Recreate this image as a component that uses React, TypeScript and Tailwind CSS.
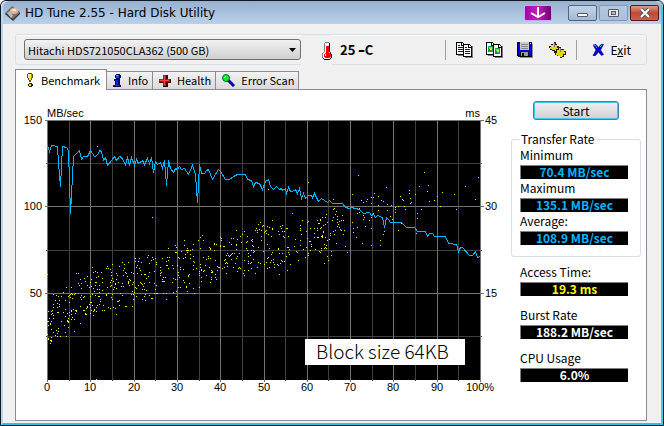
import React, { useState } from "react";

type Point = [number, number];

const TABS = ["Benchmark", "Info", "Health", "Error Scan"];

// Trace and outlier points are in thirds of a plot pixel, origin at (142, 61)
const TRACE: Point[] = [
  [142, 137], [148, 154], [155, 137], [172, 138], [176, 190], [182, 259],
  [187, 139], [200, 142], [205, 150], [212, 340], [220, 170], [238, 152],
  [245, 178], [250, 169], [262, 168], [271, 151], [284, 170], [292, 166],
  [299, 151], [303, 155], [309, 182], [316, 172], [323, 196], [333, 180],
  [342, 169], [350, 181], [358, 169], [364, 172], [376, 193], [382, 172],
  [388, 196], [395, 172], [403, 196], [409, 179], [414, 190], [427, 181],
  [434, 192], [443, 176], [448, 190], [454, 172], [460, 218], [466, 185],
  [472, 192], [481, 187], [488, 206], [493, 182], [499, 256], [506, 181],
  [512, 204], [520, 216], [527, 204], [533, 207], [539, 199], [545, 208],
  [553, 205], [565, 223], [577, 196], [585, 222], [592, 307], [598, 192],
  [604, 220], [612, 220], [619, 210], [626, 209], [638, 238], [655, 208],
  [662, 214], [675, 238], [688, 238], [700, 230], [713, 223], [736, 223],
  [742, 237], [753, 240], [760, 259], [767, 246], [779, 250], [787, 268],
  [796, 243], [805, 237], [812, 258], [821, 268], [830, 258], [839, 268],
  [844, 264], [848, 270], [855, 264], [860, 281], [865, 262], [870, 275],
  [878, 274], [886, 268], [892, 280], [898, 265], [904, 295], [910, 281],
  [917, 295], [925, 286], [933, 286], [938, 293], [944, 281], [955, 304],
  [965, 294], [982, 306], [989, 301], [997, 311], [1027, 310], [1035, 321],
  [1048, 326], [1055, 322], [1078, 327], [1090, 340], [1108, 338],
  [1114, 346], [1120, 343], [1126, 352], [1131, 346], [1147, 352],
  [1153, 382], [1160, 353], [1166, 357], [1172, 367], [1205, 367],
  [1220, 382], [1244, 382], [1253, 394], [1276, 394], [1283, 408],
  [1288, 400], [1298, 401], [1303, 409], [1335, 409], [1345, 429],
  [1369, 433], [1375, 453], [1380, 442], [1388, 442], [1407, 466],
  [1417, 466], [1427, 455], [1432, 472], [1440, 468],
];

const OUTLIERS: Point[] = [
  [292, 139], [457, 352], [805, 268], [877, 340], [925, 247], [142, 522],
  [289, 838], [1000, 298], [1001, 328], [1004, 324], [1007, 343],
  [1008, 333], [999, 352], [1012, 350], [1012, 358], [1012, 368],
  [1012, 380], [1016, 374], [1018, 365], [1028, 346], [1030, 361],
  [1006, 392], [1001, 395], [1024, 392], [1033, 392], [1018, 381],
  [1022, 389], [991, 407], [1003, 404], [1031, 404], [1009, 430],
  [1036, 439], [1042, 457], [1024, 362], [1057, 283], [1076, 226],
  [1057, 367], [1060, 386], [1061, 396], [1069, 412], [1072, 382],
  [1072, 340], [1078, 324], [1078, 338], [1084, 300], [1091, 307],
  [1090, 347], [1090, 358], [1093, 352], [1099, 304], [1101, 298],
  [1107, 362], [1096, 379], [1087, 431], [1114, 292], [1120, 292],
  [1123, 280], [1113, 310], [1114, 353], [1111, 344], [1114, 386],
  [1114, 436], [1120, 340], [1135, 290], [1144, 300], [1150, 305],
  [1135, 317], [1135, 330], [1140, 421], [1141, 436], [1150, 403],
  [1153, 394], [1159, 262], [1162, 313], [1162, 332], [1171, 349],
  [1177, 358], [1175, 316], [1186, 322], [1186, 328], [1186, 337],
  [1195, 319], [1201, 289], [1207, 298], [1210, 301], [1213, 320],
  [1216, 328], [1194, 391], [1205, 371], [1228, 271], [1228, 280],
  [1231, 295], [1234, 307], [1231, 310], [1246, 283], [1258, 259],
  [1273, 217], [1285, 256], [1282, 274], [1288, 304], [1303, 301],
  [1312, 290], [1321, 319], [1327, 277], [1364, 283], [1369, 328],
  [1396, 259], [1426, 298], [1435, 232], [1264, 328], [1253, 340],
  [1252, 355], [1249, 401], [985, 481], [974, 490],
];

// Band of the access times: plot x, top y, bottom y
const BAND = [
  [0, 180, 234], [12, 166, 220], [33, 148, 210], [48, 140, 204],
  [63, 136, 198], [93, 130, 190], [118, 123, 183], [138, 117, 174],
  [153, 114, 173], [183, 108, 165], [210, 100, 158], [243, 96, 154],
  [285, 92, 138],
];

const makeCloud = (): Point[] => {
  let seed = 2550;
  const rand = () => {
    seed = (seed * 16807) % 2147483647;
    return seed / 2147483647;
  };
  const dots: Point[] = [];
  for (let n = 0; n < 650; n++) {
    const x = 285 * Math.pow(rand(), 1.15);
    const i = BAND.findIndex((b) => b[0] >= x) || 1;
    const [x0, t0, b0] = BAND[i - 1];
    const [x1, t1, b1] = BAND[i];
    const k = (x - x0) / (x1 - x0);
    const top = t0 + (t1 - t0) * k;
    const bottom = b0 + (b1 - b0) * k;
    const y = top + (bottom - top) * (rand() * 0.8 + rand() * 0.2);
    dots.push([Math.round(x), Math.round(y)]);
  }
  return dots;
};

const DOTS: Point[] = [
  ...makeCloud(),
  ...OUTLIERS.map(
    ([x, y]): Point => [Math.round((x - 142) / 3), Math.round((y - 61) / 3)],
  ),
];

const tracePoints = TRACE.map(
  ([x, y]) => `${Math.round((x - 142) / 3)},${Math.round((y - 61) / 3)}`,
).join(" ");

const BenchmarkChart = () => {
  const columns = Array.from({ length: 21 }, (_, i) => i);
  const rows = Array.from({ length: 7 }, (_, i) => i);
  const colX = (i: number) => Math.round((i * 433) / 20);
  const rowY = (i: number) => Math.round((i * 259) / 6);

  return (
    <svg
      viewBox="0 0 492 330"
      className="block w-full font-['Liberation_Sans',Arial,sans-serif] text-[11px]"
      role="img"
      aria-label="Transfer rate and access time"
    >
      <g transform="translate(31 30)">
        <rect width="434" height="260" fill="#000" />
        <g shapeRendering="crispEdges">
          {columns.map((i) => (
            <rect key={i} x={colX(i)} width="1" height={i % 2 ? 261 : 262} fill="#404040" />
          ))}
          {rows.map((i) => (
            <rect key={i} x="-1" y={rowY(i)} width="436" height={i === 6 ? 0 : 1} fill="#404040" />
          ))}
          {columns
            .filter((i) => i % 2 === 0)
            .map((i) => (
              <rect key={i} x={colX(i)} width="1" height="262" fill="#737373" />
            ))}
          {[0, 2, 4].map((i) => (
            <rect key={i} x="-2" y={rowY(i)} width="439" height="1" fill="#737373" />
          ))}
          {DOTS.map(([x, y], i) => (
            <rect key={i} x={x} y={y} width="1" height="1" fill="#ff0" />
          ))}
          <polyline
            points={tracePoints}
            transform="translate(0.5 0.5)"
            fill="none"
            stroke="#00b4ff"
            strokeWidth="1"
          />
        </g>
        <text x="0" y="-3">MB/sec</text>
        <text x="433" y="-3" textAnchor="end">ms</text>
        {["150", "100", "50"].map((label, i) => (
          <text key={label} x="-5" y={rowY(i * 2) + 4} textAnchor="end">
            {label}
          </text>
        ))}
        {["45", "30", "15"].map((label, i) => (
          <text key={label} x="438" y={rowY(i * 2) + 4}>
            {label}
          </text>
        ))}
        {columns
          .filter((i) => i % 2 === 0)
          .map((i) => (
            <text key={i} x={colX(i)} y="271" textAnchor="middle">
              {i === 20 ? "100%" : i * 5}
            </text>
          ))}
        <rect x="258" y="219" width="160" height="26" fill="#fff" />
        <text x="269" y="239" className="font-['Noto_Sans_CJK_JP',sans-serif] text-[19px] font-light">
          Block size 64KB
        </text>
      </g>
    </svg>
  );
};

const AppIcon = () => (
  <svg viewBox="0 0 16 16" className="h-4 w-4">
    <path d="M7 1l8 6-7 8-8-7z" fill="#77706d" />
    <path d="M1 8l7 6 7-7v2l-7 7-8-7z" fill="#393a40" />
    <ellipse cx="9" cy="6" rx="4" ry="3" fill="#dfb59d" />
    <ellipse cx="9" cy="5" rx="2" ry="1" fill="#fff0e4" />
    <path d="M2 8l3-2 3 5-2 2z" fill="#b9b9be" />
  </svg>
);

const Thermometer = () => (
  <svg viewBox="0 0 11 18" className="h-[18px] w-[11px]" shapeRendering="crispEdges">
    <path d="M4 1h4v10h1v1h1v4H9v1H3v-1H2v-4h1v-1h1z" fill="#fff" />
    <path d="M4 0h4v1H4zM3 1h1v9H3zM2 10h1v1H2zM1 11h1v5H1z" fill="#808080" />
    <path d="M8 1h1v9H8zM9 10h1v2H9zM10 12h1v4h-1zM9 16h1v1H9zM3 17h6v1H3zM2 16h1v1H2z" fill="#000" />
    <path d="M5 4h3v7h1v1h1v3H9v1H4v-1H3v-3h1v-1h1z" fill="#f00000" />
    <path d="M4 12h1v2H4z" fill="#fff" />
  </svg>
);

const CopyIcon = ({ picture = false }: { picture?: boolean }) => (
  <svg viewBox="0 0 17 16" className="h-4 w-[17px]" shapeRendering="crispEdges">
    {[0, 7].map((x) => (
      <g key={x} transform={`translate(${x} ${x ? 2 : 0})`}>
        <path d="M2 2h8v12H2z" fill="#808080" />
        <path d="M0 0h6l3 3v10H0z" fill="#000" />
        <path d="M1 1h4v3h3v8H1z" fill="#fff" />
        <path d="M6 1h1v1h1v1H6z" fill="#fff" />
        {picture ? (
          <>
            <path d="M2 4h5v6H2z" fill="#00a030" />
            <path d="M3 5h3v2H3z" fill="#60ff40" />
            <path d="M4 6h2v2H4z" fill="#fff000" />
            <path d="M2 4h1v2H2zM5 8h2v2H5z" fill="#2090e0" />
          </>
        ) : (
          <path d="M2 3h2v1H2zM2 5h5v1H2zM2 7h5v1H2zM2 9h5v1H2z" fill="#0000c0" />
        )}
      </g>
    ))}
  </svg>
);

const SaveIcon = () => (
  <svg viewBox="0 0 16 16" className="h-4 w-4" shapeRendering="crispEdges">
    <path d="M2 2h14v14H3z" fill="#909090" />
    <path d="M0 0h15v15H1l-1-1z" fill="#000" />
    <path d="M1 1h13v13H2l-1-1z" fill="#0000e0" />
    <path d="M3 0h9v8H3z" fill="#c8c8c8" />
    <path d="M4 2h7v1H4zM4 4h7v1H4zM4 6h7v1H4z" fill="#888" />
    <path d="M3 10h9v4H3z" fill="#000" />
    <path d="M4 10h7v4H4z" fill="#9a9a9a" />
    <path d="M5 11h2v3H5z" fill="#000" />
    <path d="M13 1h1v1h-1z" fill="#fff" />
  </svg>
);

const OptionsIcon = () => (
  <svg viewBox="0 0 17 16" className="h-4 w-[17px]" shapeRendering="crispEdges">
    <path d="M3 2h2V0h2v2h1v2h2v3H9v2H7v2H5V9H3V8H1V6H0V4h2V2z" fill="#222" />
    <path d="M2 3h2V1h2v2h2v3h1v1H7v2H6V8H3V7H1V5h1z" fill="#e6d400" />
    <path d="M8 7h2V5h2v2h3v2h2v4h-2v2h-2v1h-2v-2H8v-1H6V9h2z" fill="#222" />
    <path d="M8 8h2V6h2v2h3v2h1v2h-2v2h-1v1h-2v-1H9v-1H7v-2h1z" fill="#e6d400" />
    <path d="M3 4h1v1H3zM9 9h1v1H9z" fill="#fffbb0" />
    <path d="M5 1h1v4H5zM11 6h1v4h-1z" fill="#808080" />
  </svg>
);

const ExitIcon = () => (
  <svg viewBox="0 0 12 12" className="h-3 w-3">
    <path d="M1 1l3-.5 2.500 3L9 .5h2.500l-3 5.500 3 4.500-2 1-3-3.500-3 3.500H1L4 6z" fill="#0000d8" stroke="#00004e" strokeWidth=".6" />
    <path d="M1 2l2-1 2 3M8 3l2-2" fill="none" stroke="#00b7c8" />
  </svg>
);

const TabIcon = ({ name }: { name: string }) => {
  switch (name) {
    case "Info":
      return (
        <svg viewBox="0 0 9 14" className="h-[14px] w-[9px]" shapeRendering="crispEdges">
          <path d="M3 0h4v1h1v3H7v1H3V4H2V1h1zM1 5h6v6h1v2H0v-2h2V7H1z" fill="#000050" />
          <path d="M3 1h3v3H3z" fill="#0050ff" />
          <path d="M3 1h2v1H3z" fill="#00e5ff" />
          <path d="M2 6h3v6H3V7H2zM1 11h6v1H1z" fill="#0028e0" />
        </svg>
      );
    case "Health":
      return (
        <svg viewBox="0 0 12 12" className="h-3 w-3" shapeRendering="crispEdges">
          <path d="M4 0h5v4h3v4H9v4H4V8H0V4h4z" fill="#300" />
          <path d="M4 0h3v4h4v3H7v4H4V7H0V4h4z" fill="#e00000" />
          <path d="M5 1h1v4h4v1H6v4H5V6H1V5h4z" fill="#ff4040" />
        </svg>
      );
    case "Error Scan":
      return (
        <svg viewBox="0 0 13 13" className="h-[13px] w-[13px]">
          <path d="M6 6l6 6" stroke="#000060" strokeWidth="3" />
          <path d="M7 7l4 4" stroke="#00f" strokeWidth="1" />
          <circle cx="4" cy="4" r="3.5" fill="#00f020" stroke="#064" />
          <path d="M2 4l2-2" stroke="#fff" />
        </svg>
      );
    default:
      return (
        <svg viewBox="0 0 8 14" className="h-[14px] w-2" shapeRendering="crispEdges">
          <path d="M2 0h4v1h1v4H6v2H5v2H3V7H2V5H1V1h1z" fill="#554b00" />
          <path d="M2 1h4v4H5v2H3V5H2z" fill="#ffee00" />
          <path d="M2 1h1v3H2z" fill="#fff" />
          <path d="M5 1h1v4H5z" fill="#b8a000" />
          <path d="M3 10h3v1h1v2H6v1H3v-1H2v-2h1z" fill="#222" />
          <path d="M3 11h2v2H3z" fill="#ffe800" />
        </svg>
      );
  }
};

const Reading = ({
  label,
  value,
  tone,
}: {
  label: string;
  value: string;
  tone: string;
}) => (
  <div>
    <dt className="h-[18px] leading-4">{label}</dt>
    <dd
      className={`h-[14px] w-[108px] border-t border-l border-[#808080] bg-black text-center leading-3 font-bold ${tone}`}
    >
      {value}
    </dd>
  </div>
);

export default function App() {
  const [tab, setTab] = useState("Benchmark");

  return (
    <div className="flex min-h-screen flex-col rounded-t-md border border-[#101820] bg-[#f0f0f0] font-['Noto_Sans_CJK_JP','Liberation_Sans',sans-serif] text-[11px] text-black">
      <div className="flex flex-1 flex-col rounded-t-md border-x-2 border-b-2 border-l-[#bcd4ec] border-r-[#3ccbea] border-b-[#25c4e8]">
        {/* Title bar */}
        <header className="flex h-[23px] items-center rounded-t-md bg-linear-to-b from-[#96b0cf] to-[#bbd1ea] pr-0.5 pl-0.5">
          <AppIcon />
          <h1 className="ml-1 flex-1 font-['DejaVu_Sans',sans-serif] text-xs">
            HD Tune 2.55 - Hard Disk Utility
          </h1>
          <button
            aria-label="Download"
            className="mr-4 flex h-4 w-7 items-center justify-center rounded-xs border border-[#c9a5ee] bg-linear-to-r from-[#a800a8] via-[#c020b8] to-[#700078]"
          >
            <svg viewBox="0 0 18 12" className="h-3 w-[18px]">
              <path d="M9 0v10M2 6l7 4 7-4" fill="none" stroke="#fff" strokeWidth="2" />
            </svg>
          </button>
          <div className="flex gap-0.5">
            <button
              aria-label="Minimize"
              className="flex h-4 w-[29px] items-center justify-center rounded-xs border border-[#53657c] bg-linear-to-b from-[#c2d3e6] to-[#a3bad4]"
            >
              <span className="mt-1 h-1 w-[11px] rounded-[1px] border border-[#555a66] bg-white" />
            </button>
            <button
              aria-label="Maximize"
              className="flex h-4 w-[29px] items-center justify-center rounded-xs border border-[#8496ad] bg-linear-to-b from-[#b4c9e0] to-[#a6bfdb]"
            >
              <span className="flex h-2 w-[11px] items-center justify-center rounded-[1px] border border-[#555a66] bg-[#e6e6e6]">
                <span className="h-1 w-[5px] border border-[#555a66] bg-[#a6bfdb]" />
              </span>
            </button>
            <button
              aria-label="Close"
              className="flex h-4 w-[29px] items-center justify-center rounded-xs border border-[#5c1a14] bg-linear-to-b from-[#dc9a8c] via-[#bd4a35] to-[#c8604a]"
            >
              <svg viewBox="0 0 12 10" className="h-[10px] w-3">
                <path d="M2 1l8 8M10 1L2 9" stroke="#555a66" strokeWidth="4" />
                <path d="M2 1l8 8M10 1L2 9" stroke="#fff" strokeWidth="2" />
              </svg>
            </button>
          </div>
        </header>

        <main className="flex flex-1 flex-col pt-2.5 pr-[14px] pb-0.5 pl-3">
          {/* Toolbar */}
          <div className="flex h-[31px] items-center rounded-[3px] border border-[#d5dfe5] pl-2 shadow-[inset_0_1px_0_#fff]">
            <div className="relative w-[277px]">
              <select
                aria-label="Drive"
                className="block h-[21px] w-full appearance-none rounded-[3px] border border-[#707070] bg-linear-to-b from-[#f2f2f2] to-[#cfcfcf] pl-[3px] leading-4"
              >
                <option>Hitachi HDS721050CLA362 (500 GB)</option>
              </select>
              <svg viewBox="0 0 7 4" className="pointer-events-none absolute top-[9px] right-[5px] h-1 w-[7px]">
                <path d="M0 0h7L3.500 4z" fill="#000" />
              </svg>
            </div>
            <div className="-mb-0.5 flex h-[31px] w-[31px] items-center justify-end bg-[#f0f0f0]">
              <Thermometer />
            </div>
            <span className="ml-2 text-[13px] font-bold">25 ｰC</span>
            <div className="ml-auto flex items-center pr-[15px]">
              <span className="h-5 w-px bg-[#a0a0a0]" />
              <button aria-label="Copy text" className="ml-2.5">
                <CopyIcon />
              </button>
              <button aria-label="Copy screenshot" className="ml-[13px]">
                <CopyIcon picture />
              </button>
              <button aria-label="Save" className="ml-[14px]">
                <SaveIcon />
              </button>
              <button aria-label="Options" className="ml-4">
                <OptionsIcon />
              </button>
              <span className="ml-2.5 h-5 w-px bg-[#a0a0a0]" />
              <button className="ml-[15px] flex items-center gap-[7px] text-xs leading-4">
                <ExitIcon />
                <span>
                  E<u>x</u>it
                </span>
              </button>
            </div>
          </div>

          {/* Tabs */}
          <div role="tablist" className="mt-1 flex items-end">
            {TABS.map((name) => (
              <button
                key={name}
                role="tab"
                aria-selected={tab === name}
                onClick={() => setTab(name)}
                className={`flex items-center border border-[#898c95] whitespace-nowrap ${
                  tab === name
                    ? "relative -mb-px h-[21px] gap-[7px] border-b-0 bg-white pr-1.5 pl-2.5"
                    : "h-[18px] gap-1.5 border-b-0 border-l-0 bg-linear-to-b from-[#f2f2f2] to-[#dadada] pr-1 pl-1.5"
                }`}
              >
                <TabIcon name={name} />
                {name}
              </button>
            ))}
          </div>

          <section className="flex flex-1 items-start border border-[#898c95] bg-white">
            <div className="min-w-0 flex-1">
              <BenchmarkChart />
            </div>
            <aside className="w-[138px] shrink-0 pt-[11px] pr-[5px] pl-[3px] text-xs">
              <button className="mx-auto block h-[19px] w-[86px] rounded-[3px] border border-[#3c7fb1] bg-linear-to-b from-[#f2f2f2] to-[#cfcfcf] leading-4 shadow-[inset_0_0_0_1px_#48c8ee]">
                Start
              </button>
              <fieldset className="mt-[11px] h-[126px] rounded-[3px] border border-[#d5dfe5] pl-2">
                <legend className="px-px leading-4">Transfer Rate</legend>
                <dl className="flex flex-col gap-px">
                  <Reading label="Minimum" value="70.4 MB/sec" tone="text-[#00b4ff]" />
                  <Reading label="Maximum" value="135.1 MB/sec" tone="text-[#00b4ff]" />
                  <Reading label="Average:" value="108.9 MB/sec" tone="text-[#00b4ff]" />
                </dl>
              </fieldset>
              <dl className="mt-[7px] flex flex-col gap-[11px] pl-[9px]">
                <Reading label="Access Time:" value="19.3 ms" tone="text-[#ffff00]" />
                <Reading label="Burst Rate" value="188.2 MB/sec" tone="text-white" />
                <Reading label="CPU Usage" value="6.0%" tone="text-white" />
              </dl>
            </aside>
          </section>
        </main>
      </div>
    </div>
  );
}
